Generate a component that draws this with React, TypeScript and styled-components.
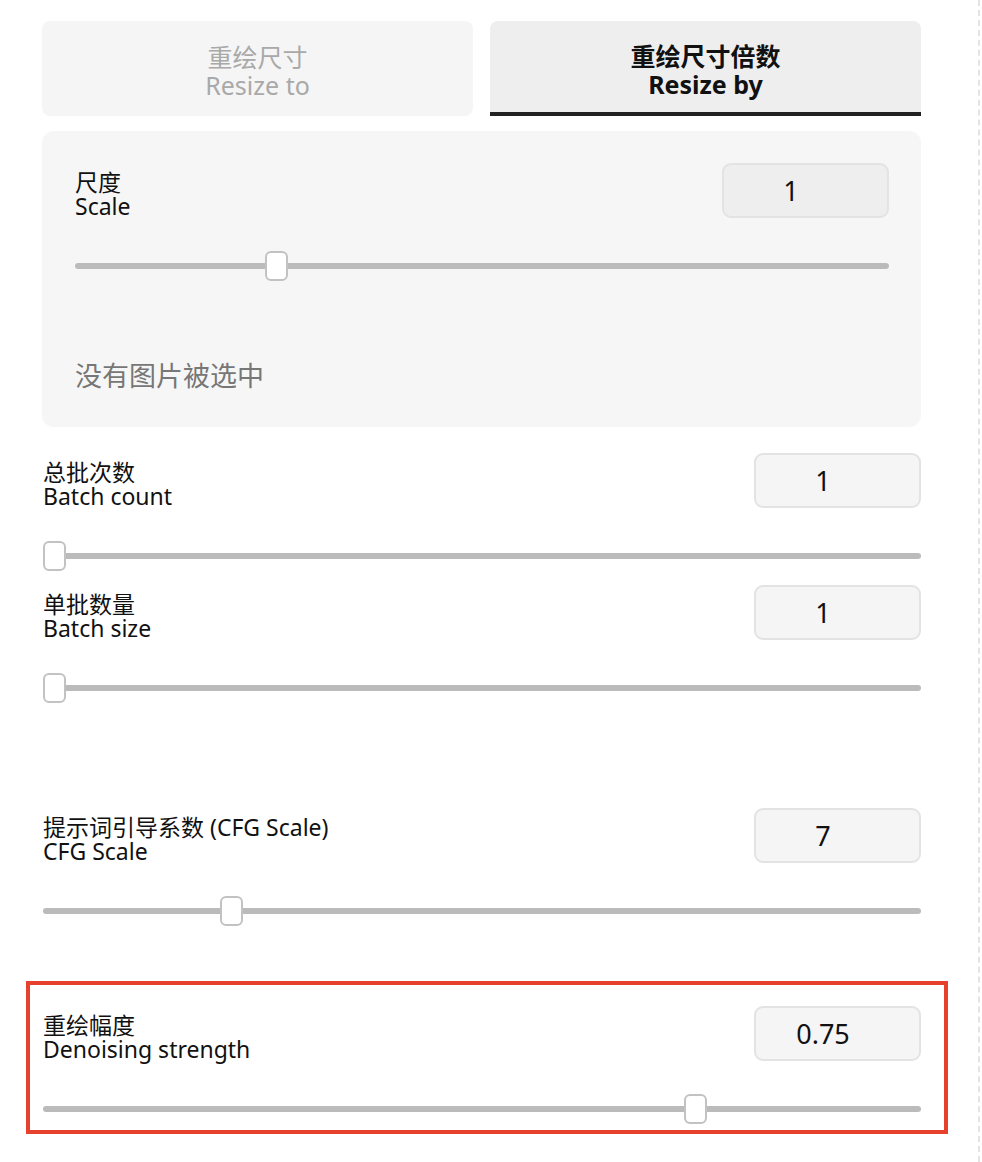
import React from 'react';
import styled, { createGlobalStyle } from 'styled-components';

const GlobalStyle = createGlobalStyle`
  html, body {
    margin: 0;
    padding: 0;
    background: #ffffff;
  }
  body {
    font-family: "Noto Sans", "Noto Sans CJK SC", sans-serif;
    color: #111111;
  }
`;

type FieldProps = {
  zh: string;
  en: string;
  value: string;
  min: number;
  max: number;
  current: number;
  inset?: boolean;
};

const Field = ({ zh, en, value, min, max, current, inset }: FieldProps) => {
  const ratio = (current - min) / (max - min);
  return (
    <FieldBlock>
      <FieldRow>
        <Label>
          <LabelLine>{zh}</LabelLine>
          <LabelLine>{en}</LabelLine>
        </Label>
        <NumberBox $inset={inset}>{value}</NumberBox>
      </FieldRow>
      <Slider>
        <Track />
        <ThumbLane>
          <Thumb style={{ left: `${ratio * 100}%` }} />
        </ThumbLane>
      </Slider>
    </FieldBlock>
  );
};

const App = () => {
  return (
    <Page>
      <GlobalStyle />
      <Column>
        <TabBar>
          <Tab>
            <TabLine>重绘尺寸</TabLine>
            <TabLine>Resize to</TabLine>
          </Tab>
          <Tab $active>
            <TabLine>重绘尺寸倍数</TabLine>
            <TabLine>Resize by</TabLine>
          </Tab>
        </TabBar>

        <Panel>
          <Field zh="尺度" en="Scale" value="1" min={0.05} max={4} current={1} inset />
          <EmptyNote>没有图片被选中</EmptyNote>
        </Panel>

        <BatchGroup>
          <Field zh="总批次数" en="Batch count" value="1" min={1} max={100} current={1} />
          <Field zh="单批数量" en="Batch size" value="1" min={1} max={8} current={1} />
        </BatchGroup>

        <CfgGroup>
          <Field zh="提示词引导系数 (CFG Scale)" en="CFG Scale" value="7" min={1} max={30} current={7} />
        </CfgGroup>

        <Highlight>
          <Field zh="重绘幅度" en="Denoising strength" value="0.75" min={0} max={1} current={0.75} />
        </Highlight>
      </Column>
    </Page>
  );
};

const Page = styled.div`
  width: 980px;
  min-height: 1162px;
  border-right: 2px dashed #e4e4e4;
  box-sizing: border-box;
`;

const Column = styled.div`
  width: 879px;
  margin-left: 42px;
  padding-top: 21px;
  display: flex;
  flex-direction: column;
`;

const TabBar = styled.div`
  display: grid;
  grid-template-columns: 1fr 1fr;
  gap: 17px;
`;

const Tab = styled.div<{ $active?: boolean }>`
  height: 95px;
  box-sizing: border-box;
  display: flex;
  flex-direction: column;
  align-items: center;
  justify-content: center;
  font-size: 25px;
  line-height: 28px;
  padding-top: ${(p) => (p.$active ? '7px' : '5px')};
  font-weight: ${(p) => (p.$active ? 700 : 400)};
  color: ${(p) => (p.$active ? '#111111' : '#a9a9a9')};
  background: ${(p) => (p.$active ? '#eeeeee' : '#f5f5f5')};
  border-radius: ${(p) => (p.$active ? '8px 8px 0 0' : '8px')};
  border-bottom: ${(p) => (p.$active ? '4px solid #222222' : 'none')};
`;

const TabLine = styled.div`
  display: block;
  height: 28px;
`;

const Panel = styled.div`
  margin-top: 15px;
  background: #f6f6f6;
  border-radius: 12px;
  padding: 32px 32px 35px 33px;
`;

const EmptyNote = styled.div`
  margin-top: 79px;
  font-size: 27px;
  line-height: 32px;
  color: #777777;
`;

const BatchGroup = styled.div`
  margin-top: 26px;
  display: flex;
  flex-direction: column;
  gap: 14px;
  padding-left: 1px;
`;

const CfgGroup = styled.div`
  margin-top: 105px;
  padding-left: 1px;
`;

const Highlight = styled.div`
  margin: 55px -27px 0 -16px;
  border: 4px solid #e5412c;
  padding: 21px 23px 6px 13px;
`;

const FieldBlock = styled.div`
  display: flex;
  flex-direction: column;
`;

const FieldRow = styled.div`
  height: 55px;
  display: flex;
  justify-content: space-between;
  align-items: flex-start;
`;

const Label = styled.div`
  margin-top: 7px;
  display: flex;
  flex-direction: column;
  font-size: 23px;
  line-height: 24px;
  color: #111111;
`;

const LabelLine = styled.div`
  display: block;
  height: 24px;
  white-space: nowrap;
`;

const NumberBox = styled.div<{ $inset?: boolean }>`
  width: 167px;
  height: 55px;
  box-sizing: border-box;
  border: 2px solid #e3e3e3;
  border-radius: 9px;
  background: ${(p) => (p.$inset ? '#eeeeee' : '#f5f5f5')};
  display: flex;
  align-items: center;
  justify-content: center;
  padding-right: 29px;
  font-size: 27px;
  color: #111111;
`;

const Slider = styled.div`
  position: relative;
  margin-top: 33px;
  height: 30px;
  display: flex;
  align-items: center;
`;

const Track = styled.div`
  width: 100%;
  height: 6px;
  border-radius: 3px;
  background: #bbbbbb;
`;

const ThumbLane = styled.div`
  position: absolute;
  left: 0;
  right: 23px;
  top: 0;
  bottom: 0;
`;

const Thumb = styled.div`
  position: absolute;
  top: 0;
  width: 23px;
  height: 30px;
  box-sizing: border-box;
  background: #ffffff;
  border: 2px solid #c2c2c2;
  border-radius: 6px;
`;

export default App;
